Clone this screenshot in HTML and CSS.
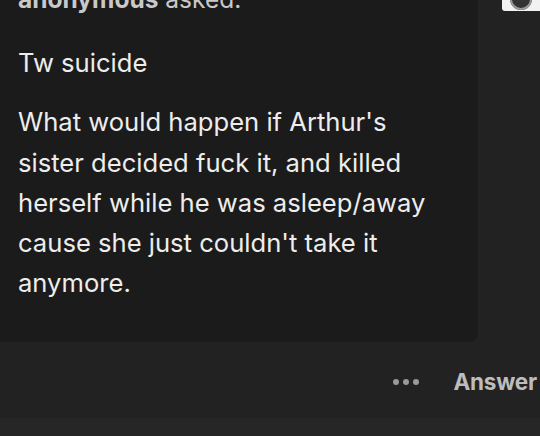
FILE: index.html
```html
<!DOCTYPE html>
<html>
<head>
<meta charset="utf-8">
<link rel="stylesheet" href="styles.css">
</head>
<body>
<div class="page">
  <div class="top">
    <div class="card">
      <div class="asker"><b>anonymous</b> asked:</div>
      <p class="q first">Tw suicide</p>
      <p class="q">What would happen if Arthur's sister decided fuck it, and killed herself while he was asleep/away cause she just couldn't take it anymore.</p>
    </div>
    <div class="side">
      <div class="avatar"><span class="dot"></span></div>
    </div>
  </div>
  <div class="actions">
    <span class="more"><i></i><i></i><i></i></span>
    <span class="answer">Answer</span>
  </div>
  <div class="footer"></div>
</div>
</body>
</html>
```

FILE: styles.css
```css
html, body {
  margin: 0;
  padding: 0;
  background: #222222;
  width: 540px;
  height: 436px;
  overflow: hidden;
  font-family: Inter, "Noto Sans", sans-serif;
}
.page {
  display: flex;
  flex-direction: column;
  height: 436px;
}
.top {
  display: flex;
  height: 342px;
}
.card {
  width: 460px;
  padding-left: 18px;
  background: #1b1b1b;
  border-bottom-right-radius: 8px;
  overflow: hidden;
}
.asker {
  margin-top: -15px;
  font-size: 24.5px;
  line-height: 28px;
  color: #c9c9c9;
}
.asker b { font-weight: 700; }
.q {
  margin: 0;
  font-size: 25.6px;
  line-height: 40.3px;
  color: #ededed;
  width: 430px;
  margin-top: 19px;
}
.q.first { margin-top: 30px; }
.side {
  flex: 1;
  display: flex;
  justify-content: flex-end;
  align-items: flex-start;
}
.avatar {
  width: 38px;
  height: 11px;
  background: #f2f2f2;
  border-bottom-left-radius: 3px;
  display: flex;
  justify-content: center;
  align-items: flex-end;
  overflow: hidden;
}
.dot {
  width: 22px;
  height: 22px;
  border-radius: 50%;
  background: #333;
  margin-bottom: 1px;
  box-shadow: 0 0 0 2px #999 inset;
}
.actions {
  height: 76px;
  display: flex;
  justify-content: flex-end;
  align-items: center;
  padding-right: 3px;
  padding-top: 3px;
  box-sizing: border-box;
  gap: 34px;
}
.more {
  display: flex;
  gap: 4px;
  margin-top: 1px;
}
.more i {
  width: 6px;
  height: 6px;
  border-radius: 50%;
  background: #9a9a9a;
}
.answer {
  font-size: 22.5px;
  font-weight: 700;
  color: #bdbdbd;
  letter-spacing: -0.2px;
}
.footer {
  flex: 1;
  background: #262626;
}
```
